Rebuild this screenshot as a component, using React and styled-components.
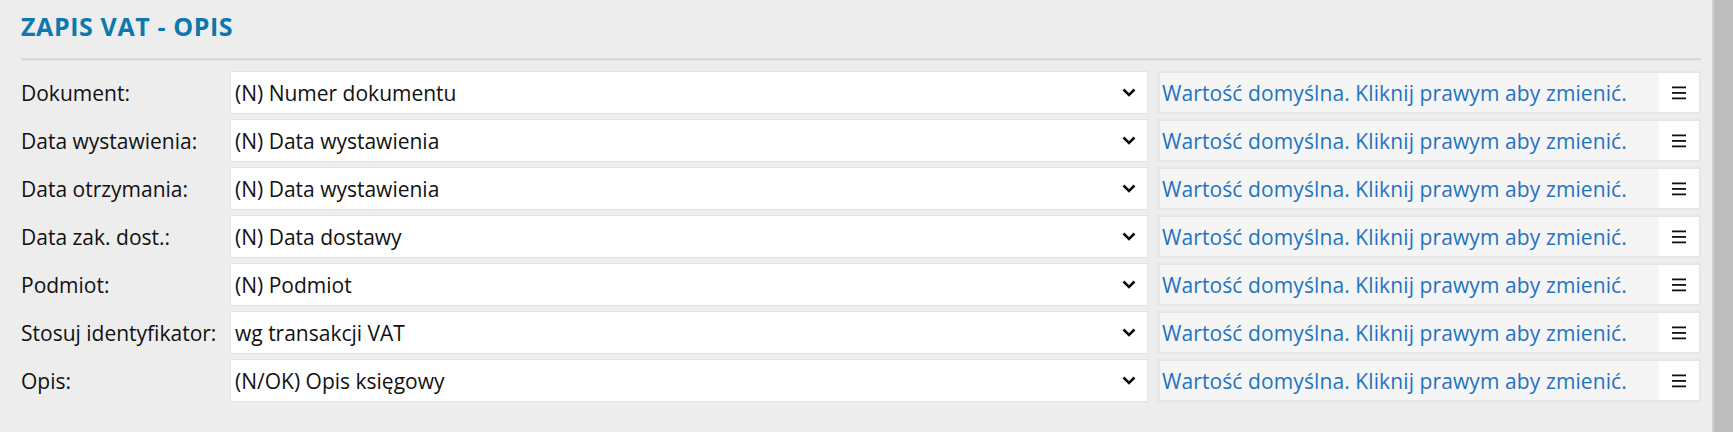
import styled, { createGlobalStyle } from "styled-components";

const GlobalStyle = createGlobalStyle`
  html, body {
    margin: 0;
    padding: 0;
    background: #ededed;
  }
  body {
    font-family: "Open Sans", "Noto Sans", sans-serif;
  }
`;

// pola opisu zapisu VAT
const rows = [
  { label: "Dokument:", value: "(N) Numer dokumentu" },
  { label: "Data wystawienia:", value: "(N) Data wystawienia" },
  { label: "Data otrzymania:", value: "(N) Data wystawienia" },
  { label: "Data zak. dost.:", value: "(N) Data dostawy" },
  { label: "Podmiot:", value: "(N) Podmiot" },
  { label: "Stosuj identyfikator:", value: "wg transakcji VAT" },
  { label: "Opis:", value: "(N/OK) Opis księgowy" },
];

const App = () => {
  return (
    <Page>
      <GlobalStyle />
      <Content>
        <Title>ZAPIS VAT - OPIS</Title>
        <Separator />
        <Form>
          {rows.map((row) => (
            <Row key={row.label}>
              <Label>{row.label}</Label>
              <Select>
                <SelectText>{row.value}</SelectText>
                <Chevron viewBox="0 0 14 9">
                  <path d="M1.5 1.5 L7 7 L12.5 1.5" fill="none" stroke="#111" strokeWidth="2.6" />
                </Chevron>
              </Select>
              <Info>
                <InfoText>Wartość domyślna. Kliknij prawym aby zmienić.</InfoText>
                <MenuButton>
                  <svg width="14" height="14" viewBox="0 0 14 14">
                    <rect x="0" y="0.5" width="14" height="1.8" fill="#111" />
                    <rect x="0" y="6" width="14" height="1.8" fill="#111" />
                    <rect x="0" y="11.5" width="14" height="1.8" fill="#111" />
                  </svg>
                </MenuButton>
              </Info>
            </Row>
          ))}
        </Form>
      </Content>
      <Scrollbar />
    </Page>
  );
};

const Page = styled.div`
  display: flex;
  width: 1733px;
  height: 432px;
  background: #ededed;
  overflow: hidden;
`;

const Content = styled.div`
  flex: 1;
  padding: 0 11px 0 21px;
`;

const Title = styled.h1`
  margin: 0;
  padding-top: 12px;
  height: 58px;
  box-sizing: border-box;
  font-size: 25px;
  line-height: 28px;
  font-weight: 700;
  letter-spacing: 0.6px;
  color: #0b78ae;
`;

const Separator = styled.div`
  height: 2px;
  background: #d9d9d9;
  border-bottom: 1px solid #e4e4e4;
`;

const Form = styled.div`
  display: flex;
  flex-direction: column;
  gap: 5px;
  padding-top: 10px;
`;

const Row = styled.div`
  display: flex;
  align-items: center;
  height: 43px;
`;

const Label = styled.div`
  width: 209px;
  font-size: 21px;
  color: #111;
`;

const Select = styled.div`
  width: 918px;
  height: 43px;
  box-sizing: border-box;
  border: 1.5px solid #e3e3e3;
  background: #fff;
  display: flex;
  align-items: center;
  padding: 0 11px 0 4px;
`;

const SelectText = styled.div`
  flex: 1;
  font-size: 21px;
  color: #111;
`;

const Chevron = styled.svg`
  width: 14px;
  height: 9px;
`;

const Info = styled.div`
  margin-left: 9px;
  width: 544px;
  height: 43px;
  box-sizing: border-box;
  border: 2px solid #e6e6e6;
  border-left-width: 3px;
  background: #fff;
  display: flex;
`;

const InfoText = styled.div`
  flex: 1;
  background: #f5f5f5;
  display: flex;
  align-items: center;
  padding-left: 2px;
  font-size: 21px;
  letter-spacing: 0.1px;
  color: #1f73c1;
  white-space: nowrap;
`;

const MenuButton = styled.div`
  width: 40px;
  display: flex;
  align-items: center;
  justify-content: center;
`;

const Scrollbar = styled.div`
  width: 21px;
  height: 100%;
  background: #bdbdbd;
  border-left: 2px solid #cfcfcf;
  box-sizing: border-box;
`;

export default App;
